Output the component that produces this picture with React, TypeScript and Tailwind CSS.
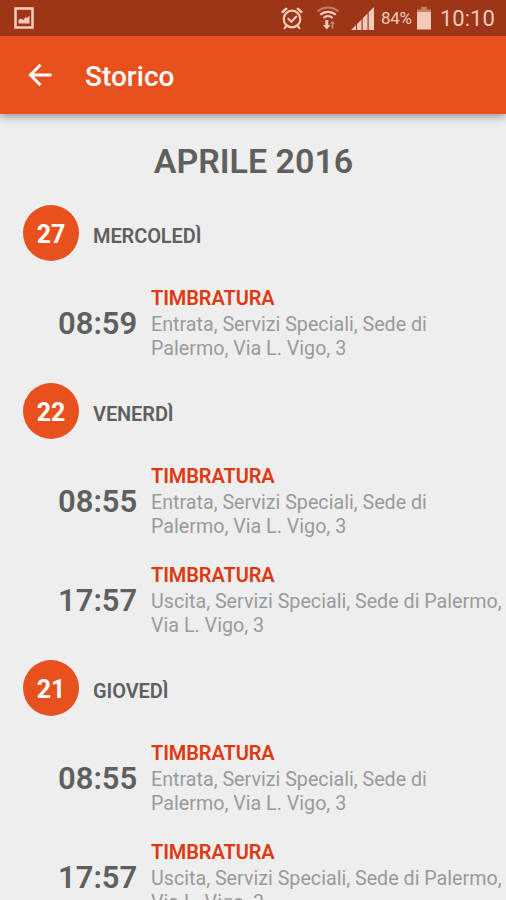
import React from 'react';

type Entry = {
  time: string;
  title: string;
  description: string;
};

type Day = {
  day: string;
  name: string;
  entries: Entry[];
};

const checkIn = 'Entrata, Servizi Speciali, Sede di Palermo, Via L. Vigo, 3';
const checkOut = 'Uscita, Servizi Speciali, Sede di Palermo, Via L. Vigo, 3';

const days: Day[] = [
  {
    day: '27',
    name: 'MERCOLEDÌ',
    entries: [{ time: '08:59', title: 'TIMBRATURA', description: checkIn }],
  },
  {
    day: '22',
    name: 'VENERDÌ',
    entries: [
      { time: '08:55', title: 'TIMBRATURA', description: checkIn },
      { time: '17:57', title: 'TIMBRATURA', description: checkOut },
    ],
  },
  {
    day: '21',
    name: 'GIOVEDÌ',
    entries: [
      { time: '08:55', title: 'TIMBRATURA', description: checkIn },
      { time: '17:57', title: 'TIMBRATURA', description: checkOut },
    ],
  },
];

const PictureIcon = () => (
  <svg className="w-5 h-[22px]" viewBox="0 0 20 22" fill="none">
    <rect x="1.5" y="1.5" width="17" height="19" stroke="#f3c9bc" strokeWidth="2.600" />
    <path d="M4.500 16.500v-3.500l2.500-1.500 2.500 1.500 2-3 1.500 1 2.500-2.500v8z" fill="#f3c9bc" />
  </svg>
);

const AlarmIcon = () => (
  <svg className="w-[22px] h-[23px]" viewBox="0 0 22 23" fill="none" stroke="#f3c9bc" strokeLinecap="round">
    <circle cx="11" cy="12" r="8.300" strokeWidth="2.200" />
    <path d="M1.600 5L5.300 1.700M20.400 5l-3.700-3.300" strokeWidth="2.400" />
    <path d="M7.300 11.800l3 3 5-5.300" strokeWidth="2" />
    <path d="M5.300 19.300l-1.800 1.900M16.700 19.300l1.800 1.900" strokeWidth="2" />
  </svg>
);

const WifiIcon = () => (
  <svg className="w-6 h-6" viewBox="0 0 24 24" fill="none">
    <path d="M1.500 5.500C7.500.2 16.500.2 22.500 5.500" stroke="#c98068" strokeWidth="2" />
    <path d="M4.300 8.800c4.400-4 11-4 15.400 0M7.400 12c2.700-2.400 6.500-2.400 9.200 0" stroke="#f3c9bc" strokeWidth="2.200" />
    <path d="M9.300 14h3v5h2.200l-3.700 4.500L7 19h2.300z" fill="#f3c9bc" />
    <path d="M15.500 22.500v-4.500h-1.500l2.500-3.500 2.500 3.500h-1.500v4.500z" fill="#c98068" />
  </svg>
);

const SignalIcon = () => (
  <svg className="w-6 h-6" viewBox="0 0 24 24" fill="#f3c9bc">
    <path d="M0 24l5-5v5zM6 18l4.500-4.500V24H6zM11.700 12.300l4.800-4.800V24h-4.800zM17.700 6.300L23 1v23h-5.300z" />
  </svg>
);

const BatteryIcon = () => (
  <svg className="w-4 h-[23px]" viewBox="0 0 16 23">
    <rect x="5" y="0" width="6" height="3" fill="#c98068" />
    <rect x="1" y="2.500" width="14" height="3" fill="#c98068" />
    <rect x="1" y="5" width="14" height="17.500" fill="#f3c9bc" />
  </svg>
);

const StatusBar = () => (
  <div className="relative z-20 flex h-9 items-center bg-[#9c3616] pl-[14px] text-[#f3c9bc]">
    <PictureIcon />
    <div className="ml-auto flex items-center pr-3">
      <AlarmIcon />
      <span className="ml-[13px]">
        <WifiIcon />
      </span>
      <span className="ml-[11px]">
        <SignalIcon />
      </span>
      <span className="ml-[6px] w-[31px] pt-0.5 text-[17px] tracking-[-0.3px]">84%</span>
      <span className="ml-[4px]">
        <BatteryIcon />
      </span>
      <span className="ml-[8px] w-[54px] pt-0.5 text-[22px] leading-9 whitespace-nowrap">10:10</span>
    </div>
  </div>
);

const AppBar = () => (
  <header className="relative z-10 flex h-[78px] items-center bg-[#e8501e] pl-7 text-white shadow-[0_3px_8px_rgba(0,0,0,0.35)]">
    <button type="button" aria-label="Indietro">
      <svg className="w-6 h-6" viewBox="0 0 24 24" fill="none" stroke="currentColor" strokeWidth="3">
        <path d="M23.500 12H3M12.500 1.800L2.500 12l10 10.200" />
      </svg>
    </button>
    <h1 className="ml-[33px] pt-[3px] text-[28px] font-medium">Storico</h1>
  </header>
);

const EntryRow = ({ time, title, description }: Entry) => (
  <li className="flex h-[99px] items-center pl-[58px]">
    <span className="w-[93px] shrink-0 pt-[6px] text-[31px] font-semibold text-[#5f5f5f]">{time}</span>
    <div className="pt-[3px]">
      <h3 className="mb-[3px] text-[20px] leading-[24px] font-semibold tracking-[-0.1px] text-[#dd3a12]">{title}</h3>
      <p className="text-[19.700px] leading-[24px] text-[#9a9a9a]">{description}</p>
    </div>
  </li>
);

const DaySection = ({ day, name, entries }: Day) => (
  <section>
    <div className="flex h-[79px] items-center pl-[23px]">
      <div className="flex h-14 w-14 items-center justify-center rounded-full bg-[#e8501e] pt-1 text-[25px] font-bold text-white">
        {day}
      </div>
      <h2 className="ml-[14px] pt-1.5 text-[20px] font-semibold tracking-[-0.1px] text-[#5f5f5f]">{name}</h2>
    </div>
    <ul>
      {entries.map((entry) => (
        <EntryRow key={entry.time} {...entry} />
      ))}
    </ul>
  </section>
);

const App = () => {
  return (
    <div className="flex h-[900px] w-full flex-col overflow-hidden bg-[#eeeeee] font-['Roboto',sans-serif]">
      <StatusBar />
      <AppBar />
      <main className="min-h-0 flex-1 overflow-hidden">
        <h2 className="h-[79px] pt-2 pl-px text-center text-[34px] leading-[79px] font-semibold text-[#5f5f5f]">
          APRILE 2016
        </h2>
        {days.map((item) => (
          <DaySection key={item.day} {...item} />
        ))}
      </main>
    </div>
  );
};

export default App;
